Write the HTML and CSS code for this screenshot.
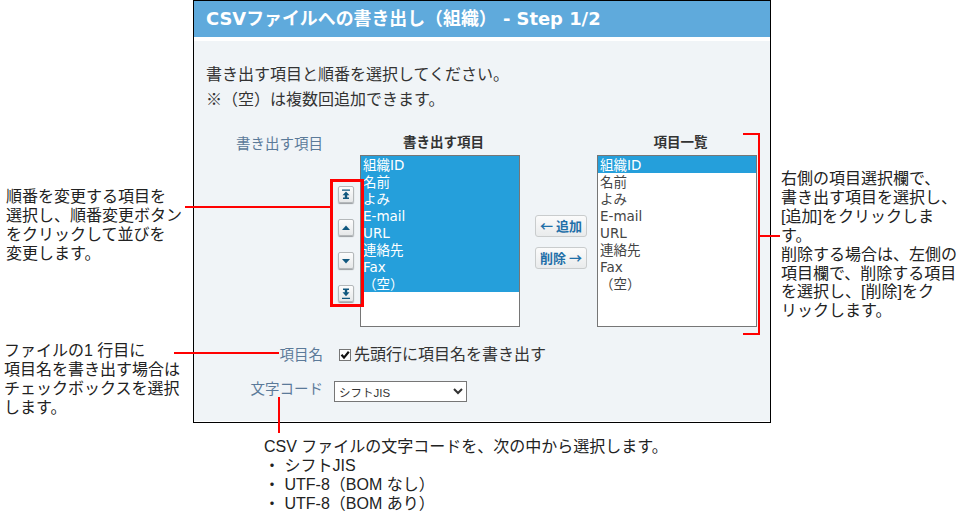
FILE: index.html
```html
<!DOCTYPE html>
<html lang="ja">
<head>
<meta charset="utf-8">
<title>CSVファイルへの書き出し（組織）</title>
<link rel="stylesheet" href="styles.css">
</head>
<body>
<div class="canvas">
  <section class="panel">
    <h1 class="panel-title">CSVファイルへの書き出し（組織） - Step 1/2</h1>
    <div class="panel-body">
      <div class="intro">
        <p>書き出す項目と順番を選択してください。</p>
        <p>※（空）は複数回追加できます。</p>
      </div>
      <div class="picker">
        <div class="field-label">書き出す項目</div>
        <div class="order-buttons">
          <button class="icon-btn" type="button"><svg width="12" height="12" viewBox="0 0 12 12"><path d="M2 0.500h8v1.300H2zM6 2.500l3.500 3.800H7.200v2.200H9V10H3V8.500h1.800V6.300H2.500z" fill="#11587f"/></svg></button>
          <button class="icon-btn" type="button"><svg width="12" height="12" viewBox="0 0 12 12"><path d="M6 3.500l4 4.500H2z" fill="#11587f"/></svg></button>
          <button class="icon-btn" type="button"><svg width="12" height="12" viewBox="0 0 12 12"><path d="M2 4h8L6 8.500z" fill="#11587f"/></svg></button>
          <button class="icon-btn" type="button"><svg width="12" height="12" viewBox="0 0 12 12"><path d="M3 0.500h6V2H7.200v2.200h2.300L6 8.200 2.500 4.200h2.300V2H3zM2 9.800h8v1.300H2z" fill="#11587f"/></svg></button>
        </div>
        <div class="list-col">
          <div class="list-title">書き出す項目</div>
          <ul class="list">
            <li class="selected">組織ID</li>
            <li class="selected">名前</li>
            <li class="selected">よみ</li>
            <li class="selected">E-mail</li>
            <li class="selected">URL</li>
            <li class="selected">連絡先</li>
            <li class="selected">Fax</li>
            <li class="selected">（空）</li>
          </ul>
        </div>
        <div class="move-buttons">
          <button class="text-btn" type="button">← 追加</button>
          <button class="text-btn" type="button">削除 →</button>
        </div>
        <div class="list-col">
          <div class="list-title">項目一覧</div>
          <ul class="list">
            <li class="selected">組織ID</li>
            <li>名前</li>
            <li>よみ</li>
            <li>E-mail</li>
            <li>URL</li>
            <li>連絡先</li>
            <li>Fax</li>
            <li>（空）</li>
          </ul>
        </div>
      </div>
      <div class="form-row row-name">
        <div class="field-label">項目名</div>
        <label class="check">
          <svg class="check-box" width="12" height="12" viewBox="0 0 12 12"><rect x=".5" y=".5" width="11" height="11" fill="#fff" stroke="#767676"/><path d="M2.500 5.800l2.500 2.800L9.800 2.800" fill="none" stroke="#111" stroke-width="2.200"/></svg>先頭行に項目名を書き出す
        </label>
      </div>
      <div class="form-row row-code">
        <div class="field-label">文字コード</div>
        <select class="code-select"><option>シフトJIS</option><option>UTF-8（BOM なし）</option><option>UTF-8（BOM あり）</option></select>
      </div>
    </div>
  </section>

  <div class="mark mark-order"></div>
  <div class="line line-order"></div>
  <div class="line line-name"></div>
  <div class="line line-code"></div>
  <div class="mark mark-list"></div>
  <div class="line line-list"></div>

  <p class="note note-order">順番を変更する項目を<br>選択し、順番変更ボタン<br>をクリックして並びを<br>変更します。</p>
  <p class="note note-name">ファイルの1 行目に<br>項目名を書き出す場合は<br>チェックボックスを選択<br>します。</p>
  <p class="note note-list">右側の項目選択欄で、<br>書き出す項目を選択し、<br>[追加]をクリックしま<br>す。<br>削除する場合は、左側の<br>項目欄で、削除する項目<br>を選択し、[削除]をク<br>リックします。</p>
  <p class="note note-code">CSV ファイルの文字コードを、次の中から選択します。<br>・ シフトJIS<br>・ UTF-8（BOM なし）<br>・ UTF-8（BOM あり）</p>
</div>
</body>
</html>
```

FILE: styles.css
```css
* { box-sizing: border-box; }
html, body { margin: 0; padding: 0; background: #fff; }
body { font-family: "DejaVu Sans", "Noto Sans CJK JP", sans-serif; color: #333; }
ul, p, h1 { margin: 0; padding: 0; }
.canvas { position: relative; width: 960px; height: 522px; overflow: hidden; }

.panel { position: absolute; left: 193px; top: 0; width: 578px; height: 423px; border: 1px solid #000; background: #fff; }
.panel-title { height: 36px; padding-left: 12px; background: #5faadc; color: #fff; font-size: 17.900px; font-weight: 700; line-height: 36px; white-space: nowrap; }
.panel-body { height: 380px; margin-top: 4px; background: #f0f4f7; }

.intro { padding: 21px 0 0 12px; font-size: 16px; line-height: 25px; font-family: "Liberation Sans", "Noto Sans CJK JP", sans-serif; }

.picker { display: flex; margin-top: 21px; height: 201px; }
.field-label { width: 129px; text-align: right; font-size: 14.500px; line-height: 20px; color: #5b7a99; font-family: "Liberation Sans", "Noto Sans CJK JP", sans-serif; white-space: nowrap; }
.picker .field-label { padding-top: 1px; }
.order-buttons { display: flex; flex-direction: column; gap: 16px; margin: 53px 0 0 15px; width: 16px; }
.icon-btn { display: flex; align-items: center; justify-content: center; width: 16px; height: 17px; padding: 0; border: 1px solid #b4b8ba; border-radius: 2px; background: linear-gradient(#fdfdfd, #e6e8e9); box-shadow: 0 1px 1px #9a9ea1; }
.list-col { width: 160px; margin-left: 6px; }
.list-col:last-child { margin-left: 10px; }
.list-title { height: 22px; padding-left: 7px; text-align: center; font-size: 13.500px; font-weight: 700; line-height: 20px; color: #333; font-family: "Liberation Sans", "Noto Sans CJK JP", sans-serif; white-space: nowrap; }
.list { height: 172px; list-style: none; border: 1px solid #767676; background: #fff; color: #444; font-size: 13.500px; line-height: 18px; }
.list li { height: 17px; padding-left: 2px; white-space: nowrap; overflow: hidden; }
.list li.selected { background: #259fdb; color: #fff; }

.move-buttons { display: flex; flex-direction: column; gap: 10px; width: 52px; margin: 82px 0 0 15px; }
.text-btn { width: 52px; height: 22px; padding: 0; border: 1px solid #c9cccd; border-radius: 3px; background: linear-gradient(#fbfbfb, #e9ebec); color: #1f6fa8; font: 700 13px/20px "Noto Sans CJK JP", sans-serif; white-space: nowrap; }

.form-row { display: flex; align-items: flex-start; }
.row-name { margin-top: 11px; height: 20px; }
.row-code { margin-top: 16px; height: 21px; }
.row-code .field-label { margin-top: -2px; }
.check { display: flex; align-items: center; margin-left: 16px; font-size: 16px; line-height: 20px; color: #333; font-family: "Liberation Sans", "Noto Sans CJK JP", sans-serif; white-space: nowrap; }
.check-box { margin-right: 3px; }
.code-select { width: 133px; height: 21px; margin-left: 11px; padding: 2px 0 0; border: 1px solid #767676; border-radius: 0; background-color: #fff; color: #333; font: 11.500px "Liberation Sans", "Noto Sans CJK JP", sans-serif; }

.mark, .line { position: absolute; border: 0 solid #f00; background: none; }
.mark-order { left: 330px; top: 179px; width: 34px; height: 128px; border-width: 3px; }
.line-order { left: 185px; top: 206px; width: 145px; height: 2px; background: #f00; }
.line-name { left: 174px; top: 352px; width: 105px; height: 2px; background: #f00; }
.line-code { left: 278px; top: 397px; width: 2px; height: 36px; background: #f00; }
.mark-list { left: 743px; top: 133px; width: 17px; height: 202px; border-width: 2px 2px 2px 0; }
.line-list { left: 760px; top: 235px; width: 20px; height: 2px; background: #f00; }

.note { position: absolute; font-size: 16px; line-height: 18.900px; color: #222; font-family: "Liberation Sans", "Noto Sans CJK JP", sans-serif; white-space: nowrap; }
.note-order { left: 6px; top: 188px; }
.note-name { left: 4px; top: 342px; }
.note-list { left: 781px; top: 170px; }
.note-code { left: 264px; top: 438px; }
```
